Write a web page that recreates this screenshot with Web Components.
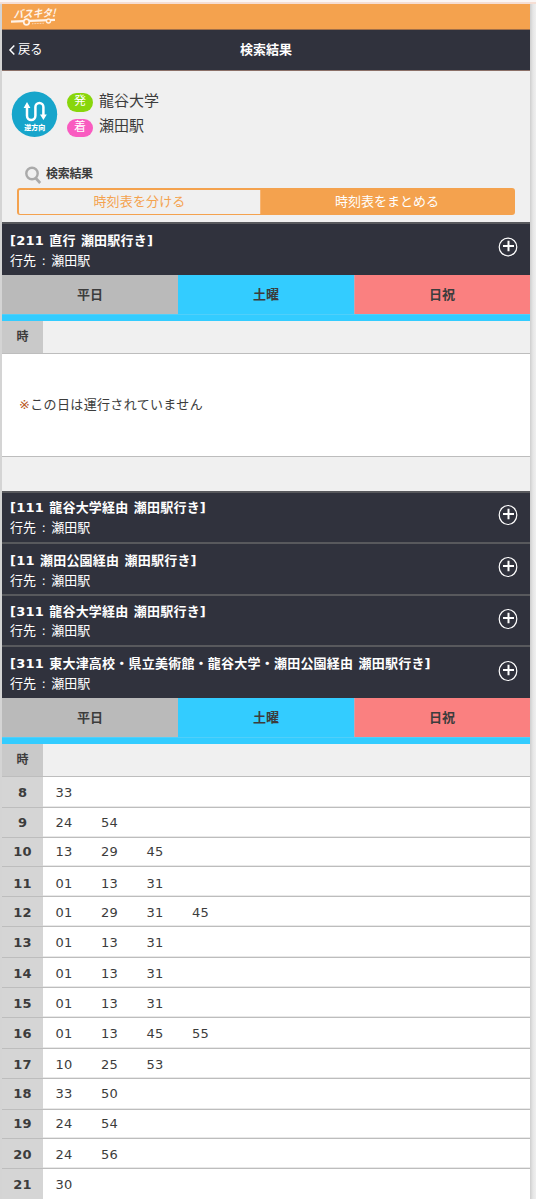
<!DOCTYPE html>
<html lang="ja">
<head>
<meta charset="utf-8">
<title>検索結果</title>
<style>
html,body{margin:0;height:1199px;overflow:hidden}
body{background:#d4d4d4;color:#3c3c3c;font:13px/20px "DejaVu Sans","Noto Sans CJK JP",sans-serif}
</style>
</head>
<body>
<bus-page>
  <bus-header></bus-header>
  <route-summary></route-summary>
  <route-bar style="--h:53px;--pt:7px;--ph:12px" code="[211 直行 瀬田駅行き]" round></route-bar>
  <day-tabs></day-tabs>
  <hour-head style="--h:33px"></hour-head>
  <no-service>この日は運行されていません</no-service>
  <route-bar style="--h:51px;--pt:5px;--ph:11px" code="[111 龍谷大学経由 瀬田駅行き]"></route-bar>
  <route-bar style="--h:52px;--pt:7px;--ph:12px" code="[11 瀬田公園経由 瀬田駅行き]"></route-bar>
  <route-bar style="--h:51px;--pt:6px;--ph:12px;--gap:19px" code="[311 龍谷大学経由 瀬田駅行き]"></route-bar>
  <route-bar style="--h:53px;--pt:7px;--ph:13px" code="[311 東大津高校・県立美術館・龍谷大学・瀬田公園経由 瀬田駅行き]"></route-bar>
  <day-tabs></day-tabs>
  <hour-head style="--h:33px"></hour-head>
  <time-table></time-table>
</bus-page>
<script>
function define(name, html, after){
  customElements.define(name, class extends HTMLElement{
    connectedCallback(){
      if(this.shadowRoot) return;
      const t=document.createElement('template');
      t.innerHTML=html;
      this.attachShadow({mode:'open'}).append(t.content.cloneNode(true));
      if(after) after(this,this.shadowRoot);
    }
  });
}

define('bus-page',`<style>
:host{display:block;height:1199px;background:linear-gradient(#fbf6f5 2px,#f5ded4 2px 4px,transparent 4px),linear-gradient(90deg,#d4d4d4 0 530px,#cecece 530px,#e6e6e6 533px,#efefef 536px)}
main{display:flex;flex-direction:column;width:528px;height:1195px;margin-left:2px;background:#f0f0f0;overflow:hidden}
.top{height:4px}
</style><div class="top"></div><main><slot></slot></main>`);

define('bus-header',`<style>
:host{display:block;flex:none}
.brand{height:25px;background:#f4a24e;border-bottom:1px solid #a17049;padding-left:8px}
.nav{height:40px;background:#30323d;border-bottom:1px solid #8b7068;display:grid;grid-template-columns:1fr auto 1fr;align-items:center;color:#fff}
.back{display:flex;align-items:center;padding-left:7px;gap:3px;font-size:12.3px}
.back svg{margin-top:-1px}
b{font-size:13px}
svg{display:block;overflow:visible}
text{font:700 10.5px/1 "Noto Sans CJK JP",sans-serif;fill:#fff3e9}
</style>
<div class="brand"><svg width="60" height="25" viewBox="0 0 60 25">
<g transform="translate(3.5 14) rotate(-2) skewX(-16)"><text textLength="42" lengthAdjust="spacingAndGlyphs">バスキタ!</text></g>
<path d="M1 17.6L45 15.8" stroke="#fff3e9" stroke-width="2.2"/>
<circle cx="16.5" cy="18" r="2.8" fill="#f4a24e" stroke="#fff3e9" stroke-width="1.7"/>
<circle cx="38.5" cy="17" r="2" fill="#f4a24e" stroke="#fff3e9" stroke-width="1.4"/>
<path d="M22 19.8L34 19.2" stroke="#fff3e9" stroke-width="1" stroke-dasharray="1 .6" opacity=".7"/>
</svg></div>
<div class="nav"><div class="back"><svg width="6" height="10" viewBox="0 0 6 10"><path d="M5.3.6L1 5l4.3 4.4" fill="none" stroke="#fff" stroke-width="1.5"/></svg><span>戻る</span></div><b>検索結果</b></div>`);

define('route-summary',`<style>
:host{display:block;flex:none;height:151px;background:#f0f0f0}
.ends{display:flex;padding:20px 0 0 9px;gap:9px;height:68px}
dl{margin:-3px 0 0;display:grid;grid-template-columns:26px auto;column-gap:6px;grid-auto-rows:25px;align-items:center}
dt{height:19px;border-radius:10px;background:#88d60b;color:#fff;font-size:12px;line-height:16px;text-align:center;margin-top:3px}
dt.g{background:#f95bc0;height:18px;margin-top:4px}
dd{margin:0;font-size:15px;line-height:26px}
h2{display:flex;align-items:center;font-size:12px;line-height:18px;margin:1px 0 0;padding-left:22px;gap:4px;letter-spacing:-.3px;height:28px}
h2 svg{margin-top:3px}
h2 span{margin-top:-1px}
.seg{display:grid;grid-template-columns:241px 1fr;margin:0 0 0 15px;width:495px;height:24px;border:1.5px solid #f4a24e;border-width:2px 1px 1px 2px;border-radius:3px;color:#f4a24e;line-height:23px;text-align:center}
.seg :first-child{letter-spacing:.15px}
.seg :last-child{background:#f4a24e;color:#fff;box-shadow:inset 1px 0 #f7b472}
text{font:900 7px "Noto Sans CJK JP",sans-serif;fill:#fff}
</style>
<div class="ends"><svg width="47" height="47" viewBox="0 0 47 47"><circle cx="23.5" cy="23.3" r="22.7" fill="#17a5cb"/>
<path d="M16 14v10.8a4.2 4.2 0 0 0 8.4 0V16a4 4 0 0 1 8 0v9" fill="none" stroke="#fff" stroke-width="2.5"/><path d="M12.6 17L16 11l3.4 6zM29 23.5h6.8L32.4 29z" fill="#fff"/><text x="13.2" y="38.6">逆方向</text></svg>
<dl><dt>発</dt><dd>龍谷大学</dd><dt class="g">着</dt><dd>瀬田駅</dd></dl></div>
<h2><svg width="18" height="19" viewBox="0 0 18 19"><circle cx="8" cy="7.5" r="5.7" fill="none" stroke="#aaa" stroke-width="2.4"/><path d="M11.6 12l4.6 5" stroke="#aaa" stroke-width="2.7"/></svg><span>検索結果</span></h2>
<div class="seg"><span>時刻表を分ける</span><span>時刻表をまとめる</span></div>`);

define('route-bar',`<style>
:host{display:flex;justify-content:space-between;flex:none;box-sizing:border-box;height:var(--h);background:#30323d;border-top:2px solid #58595d;color:#fff;padding:var(--pt) 12px 0 8px}
div{white-space:nowrap;line-height:20px}
b{display:block;height:var(--gap,20px);letter-spacing:.22px;word-spacing:.5px}
span{word-spacing:1px;letter-spacing:.1px}
svg{display:block;flex:none;margin-top:calc(var(--ph) - var(--pt))}
</style><div><b></b><span>行先 : 瀬田駅</span></div>
<svg width="20" height="22" viewBox="0 0 20 22"><ellipse cx="10" cy="11" rx="8.8" ry="9.5" fill="none" stroke="#fff" stroke-width="1.2"/><path d="M5 10h11M10.5 4.8v10.4" stroke="#fff" stroke-width="2"/></svg>`,
(el,r)=>{
  r.querySelector('b').textContent=el.getAttribute('code');
  if(el.hasAttribute('round')) r.querySelector('ellipse').setAttribute('ry','8.8');
});

define('day-tabs',`<style>
:host{display:grid;grid-template-columns:repeat(3,1fr);flex:none;height:46px;box-sizing:border-box;border-bottom:6px solid #3cf;line-height:39px;text-align:center}
b{font-weight:700;border-bottom:1px solid #50cffa}
.w{background:#bababa}.s{background:#3cf}.h{background:#fa8080;box-shadow:inset 1px 0 #c9a2af}
</style><b class="w">平日</b><b class="s">土曜</b><b class="h">日祝</b>`);

define('hour-head',`<style>
:host{display:block;flex:none;box-sizing:border-box;height:var(--h);border-bottom:1px solid #bdbdbd;background:#f0f0f0}
b{display:block;width:41px;height:100%;background:#c9c9c9;text-align:center;font-size:12px;line-height:32px}
</style><b>時</b>`);

define('no-service',`<style>
:host{display:block;flex:none;height:137px;background:#f0f0f0}
p{margin:0;height:102px;background:#fff;border-bottom:1px solid #bdbdbd;padding-left:17px;line-height:102px;letter-spacing:.35px}
i{font-style:normal;color:#b8571c}
</style><p><i>※</i><slot></slot></p>`);

define('time-table',`<style>
:host{display:block;flex:none;background:#fff}
.r{display:grid;grid-template-columns:41px 1fr;box-sizing:border-box;border-bottom:1px solid #bdbdbd;box-shadow:inset 0 -1px #e9e9e9}
b{background:#d5d5d5;text-align:center;letter-spacing:.2px}
b,.m{line-height:20px;padding-top:var(--p)}
.m{display:grid;grid-template-columns:repeat(6,45.5px);padding-left:12.5px;letter-spacing:.2px}
</style>`,(el,root)=>{
  [[8,'33',31,6],[9,'24 54',30,5],[10,'13 29 45',29,4],[11,'01 13 31',30,7],[12,'01 29 31 45',30,6],[13,'01 13 31',31,6],[14,'01 13 31',30,6],[15,'01 13 31',30,6],[16,'01 13 45 55',31,6],[17,'10 25 53',30,6],[18,'33 50',31,5],[19,'24 54',29,4],[20,'24 56',30,6],[21,'30',32,6]].forEach(([h,m,height,p])=>{
    const r=document.createElement('div');
    r.className='r';
    r.style.cssText='height:'+height+'px;--p:'+p+'px';
    r.innerHTML='<b>'+h+'</b><div class="m">'+m.split(' ').map(x=>'<span>'+x+'</span>').join('')+'</div>';
    root.append(r);
  });
});
</script>
</body>
</html>
